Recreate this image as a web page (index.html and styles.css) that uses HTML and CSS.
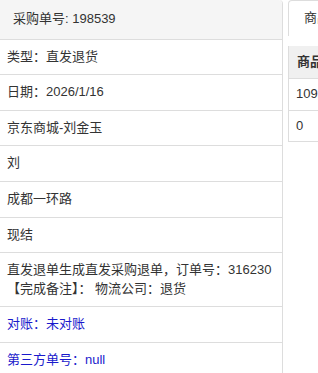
FILE: index.html
```html
<!DOCTYPE html>
<html lang="zh-CN">
<head>
	<meta charset="UTF-8">
	<meta name="viewport" content="width=device-width, initial-scale=1.0">
	<title>采购单详情</title>
	<link rel="stylesheet" href="styles.css">
</head>
<body>
	<div class="page">
		<div class="order-panel">
			<div class="order-heading">采购单号: 198539</div>
			<div class="order-list">
				<div class="order-item">类型：直发退货</div>
				<div class="order-item">日期：2026/1/16</div>
				<div class="order-item">京东商城-刘金玉</div>
				<div class="order-item">刘</div>
				<div class="order-item">成都一环路</div>
				<div class="order-item">现结</div>
				<div class="order-item">直发退单生成直发采购退单，订单号：316230 【完成备注】： 物流公司：退货</div>
				<div class="order-item link">对账：未对账</div>
				<div class="order-item link">第三方单号：null</div>
			</div>
		</div>
		<div class="goods-panel">
			<div class="tabs">
				<div class="tab active">商品明细</div>
			</div>
			<table class="goods-table">
				<thead>
					<tr>
						<th>商品编码</th>
						<th>商品名称</th>
						<th>数量</th>
					</tr>
				</thead>
				<tbody>
					<tr>
						<td>109237</td>
						<td>退货商品</td>
						<td>1</td>
					</tr>
					<tr>
						<td>0</td>
						<td></td>
						<td></td>
					</tr>
				</tbody>
			</table>
		</div>
	</div>
</body>
</html>
```

FILE: styles.css
```css
body {
	margin: 0;
	background-color: #fff;
	font-family: "Liberation Sans", "Noto Sans CJK SC", sans-serif;
	font-size: 13px;
	line-height: 18.6px;
	color: #333;
	overflow: hidden;
}

.page {
	display: flex;
	width: 318px;
	overflow: hidden;
}

.order-panel {
	flex-shrink: 0;
	width: 282px;
	border-right: 1px solid #ddd;
	border-top-right-radius: 4px;
}

.order-heading {
	padding: 10px 13px;
	background-color: #f5f5f5;
	border-bottom: 1px solid #ddd;
	border-top-right-radius: 4px;
}

.order-item {
	padding: 8px 7px;
	border-bottom: 1px solid #ddd;
}

.link {
	color: #1a1acc;
}

.goods-panel {
	flex-shrink: 0;
	width: 320px;
	margin-left: 5px;
}

.tabs {
	display: flex;
}

.tab {
	padding: 8px 15px;
	border: 1px solid #ddd;
	border-bottom: none;
	border-radius: 4px 4px 0 0;
}

.goods-table {
	margin-top: 10px;
	border-collapse: collapse;
	border-left: 1px solid #ddd;
	white-space: nowrap;
}

.goods-table th {
	padding: 7px 8px;
	background-color: #f0f0f0;
	font-weight: bold;
	text-align: left;
	border-bottom: 1px solid #ddd;
}

.goods-table td {
	padding: 6px 7px;
	border-bottom: 1px solid #ddd;
}
```
